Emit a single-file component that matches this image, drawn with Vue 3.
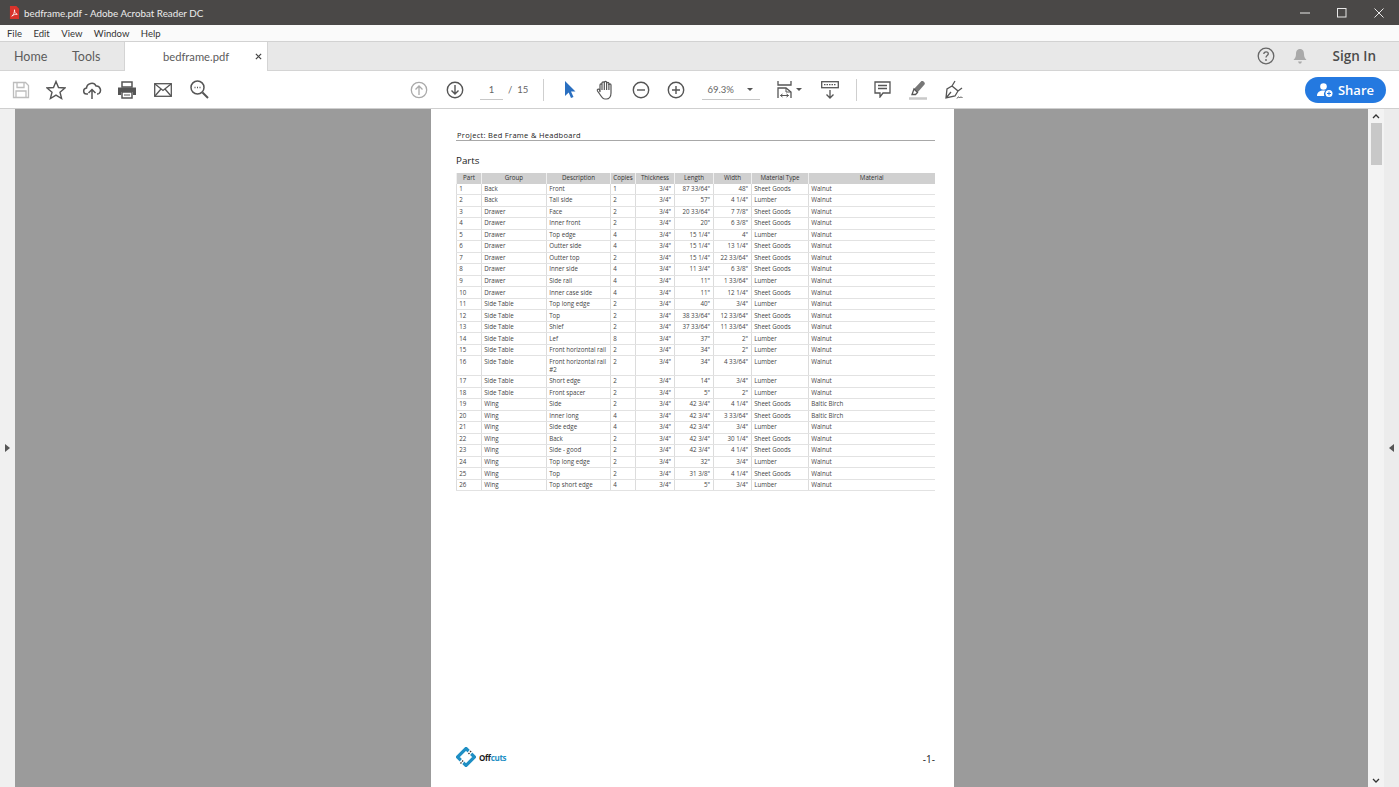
<template>
  <div class="app">
    <div class="titlebar">
      <svg class="pdf-icon" viewBox="0 0 12 14" width="11" height="13">
        <path d="M1 0h7l3 3v11H1z" fill="#d9332b" />
        <path d="M3 11c2-1 3-4 3-7 0 3 1 4 3 5-2-.3-4 .4-6 2z" fill="none" stroke="#fff" stroke-width=".9" />
      </svg>
      <span class="title">bedframe.pdf - Adobe Acrobat Reader DC</span>
      <div class="win-btns">
        <svg viewBox="0 0 10 10" width="10" height="10"><path d="M0 5h10" stroke="#e8e8e8" /></svg>
        <svg viewBox="0 0 10 10" width="10" height="10"><rect x=".5" y=".5" width="8.5" height="8.5" fill="none" stroke="#e8e8e8" /></svg>
        <svg viewBox="0 0 10 10" width="10" height="10"><path d="M.5.5l9 9M9.500.5l-9 9" stroke="#e8e8e8" /></svg>
      </div>
    </div>

    <div class="menubar">
      <span v-for="m in menus" :key="m">{{ m }}</span>
    </div>

    <div class="tabbar">
      <span class="nav-tab home">Home</span>
      <span class="nav-tab tools">Tools</span>
      <div class="doc-tab">
        <span>bedframe.pdf</span>
        <svg viewBox="0 0 8 8" width="7" height="7"><path d="M1 1l6 6M7 1L1 7" stroke="#444" stroke-width="1.4" /></svg>
      </div>
      <div class="tab-right">
        <svg viewBox="0 0 18 18" width="18" height="18">
          <circle cx="9" cy="9" r="7.800" fill="none" stroke="#666" stroke-width="1.300" />
          <path d="M6.800 7c.2-3 4.500-2.800 4.500-.2 0 1.800-2.300 1.800-2.300 3.700" fill="none" stroke="#666" stroke-width="1.300" />
          <circle cx="9" cy="13" r=".9" fill="#666" />
        </svg>
        <svg class="bell" viewBox="0 0 14 16" width="14" height="16">
          <path d="M7 1c-3 0-4 2.500-4 5 0 3-1 4-2.500 6h13C12 10 11 9 11 6c0-2.500-1-5-4-5z" fill="#a9a9a9" />
          <path d="M5 13.500h4l-1 2H6z" fill="#a9a9a9" />
        </svg>
        <span class="signin">Sign In</span>
      </div>
    </div>

    <div class="toolbar">
      <svg class="ic save" viewBox="0 0 18 18" width="18" height="18" fill="none" stroke="#bdbdbd" stroke-width="1.300">
        <path d="M1.500 1.500h12l3 3v12h-15z" />
        <path d="M5 1.500v5h7v-5M4 16.500v-6.500h10v6.500" />
      </svg>
      <svg class="ic star" viewBox="0 0 20 20" width="20" height="20" fill="none" stroke="#555" stroke-width="1.400">
        <path d="M10 1.500l2.500 6 6.500.5-5 4.200 1.600 6.300-5.600-3.400-5.600 3.400 1.600-6.300-5-4.200 6.500-.5z" />
      </svg>
      <svg class="ic cloud" viewBox="0 0 20 20" width="20" height="20" fill="none" stroke="#555" stroke-width="1.500">
        <path d="M6 14H4.500C1 14 .5 8.500 4.500 8 5 3 12 1.500 14 6c4-.5 6 5 3 7.500-.6.400-1 .5-2 .5" />
        <path d="M10 19v-9M6.500 13l3.500-3.500 3.500 3.500" />
      </svg>
      <svg class="ic print" viewBox="0 0 18 18" width="18" height="18">
        <path d="M4 1h10v5H4z" fill="none" stroke="#555" stroke-width="1.500" />
        <path d="M0 6.500h18V14h-3v-3H3v3H0z" fill="#555" />
        <path d="M4 11h10v6H4z" fill="none" stroke="#555" stroke-width="1.500" />
        <path d="M6 14h6" stroke="#555" />
      </svg>
      <svg class="ic mail" viewBox="0 0 18 14" width="18" height="14" fill="none" stroke="#555" stroke-width="1.300">
        <rect x=".7" y=".7" width="16.600" height="12.600" />
        <path d="M1 1l8 6.500L17 1M1 13l6-7M17 13l-6-7" />
      </svg>
      <svg class="ic search" viewBox="0 0 19 19" width="19" height="19" fill="none" stroke="#555" stroke-width="1.500">
        <circle cx="7.500" cy="7.500" r="6.500" />
        <path d="M12.500 12.500l5.500 5.500" stroke-width="2" />
        <path d="M4.500 7.500h1M7 7.500h1M9.500 7.500h1" />
      </svg>

      <svg class="ic up" viewBox="0 0 18 18" width="18" height="18" fill="none" stroke="#aaa" stroke-width="1.300">
        <circle cx="9" cy="9" r="7.700" />
        <path d="M9 14V5M5.500 8.500L9 5l3.500 3.500" />
      </svg>
      <svg class="ic down" viewBox="0 0 18 18" width="18" height="18" fill="none" stroke="#555" stroke-width="1.400">
        <circle cx="9" cy="9" r="7.700" />
        <path d="M9 4v9M5.500 9.500L9 13l3.500-3.500" />
      </svg>
      <div class="pager">
        <span class="page-input">1</span>
        <span class="page-total">/&nbsp; 15</span>
      </div>
      <i class="divider first"></i>
      <svg class="ic cursor" viewBox="0 0 12 17" width="12" height="17">
        <path d="M1 0l10.500 10.500H7l2.500 5.500-2.500 1-2.300-5.500L1 15z" fill="#2a6fc0" />
      </svg>
      <svg class="ic hand" viewBox="0 0 19 20" width="19" height="20" fill="none" stroke="#555" stroke-width="1.200">
        <path d="M4 12V5c0-1.500 2-1.500 2 0V3c0-1.500 2.300-1.500 2.300 0v-.5c0-1.500 2.300-1.500 2.300 0V3.500c0-1.500 2.300-1.500 2.300 0V5c0-1.500 2.100-1.500 2.100 0v8c0 3.500-2 6-4.500 6H9c-2.500 0-3.500-2-5-4.500L1.500 11c-.8-1.500 1-2.500 2-1.300z" />
        <path d="M6 5v5M8.300 3v7M10.600 3v7M12.900 4v6" />
      </svg>
      <svg class="ic minus" viewBox="0 0 18 18" width="18" height="18" fill="none" stroke="#555" stroke-width="1.400">
        <circle cx="9" cy="9" r="7.700" />
        <path d="M5 9h8" />
      </svg>
      <svg class="ic plus" viewBox="0 0 18 18" width="18" height="18" fill="none" stroke="#555" stroke-width="1.400">
        <circle cx="9" cy="9" r="7.700" />
        <path d="M5 9h8M9 5v8" />
      </svg>
      <div class="zoom-box">
        <span>69.3%</span>
        <b class="caret"></b>
      </div>
      <svg class="ic fit" viewBox="0 0 16 18" width="16" height="18" fill="none" stroke="#555" stroke-width="1.300">
        <path d="M1 0v4h13V0M1 17V7h8l5 4v6" />
        <path d="M9 7v4h5" stroke-width="1" />
        <path d="M3.500 14.500h8M3.500 14.500l2-1.500M3.500 14.500l2 1.500M11.500 14.500l-2-1.500M11.500 14.500l-2 1.500" stroke-width="1" />
      </svg>
      <b class="caret fit-caret"></b>
      <svg class="ic stamp" viewBox="0 0 18 18" width="18" height="18" fill="none" stroke="#555" stroke-width="1.300">
        <rect x=".7" y=".7" width="16.600" height="6" />
        <path d="M3 3.700h12" stroke-dasharray="1.500 1" />
        <path d="M9 9v8M5.500 13.500L9 17l3.500-3.500" />
      </svg>
      <i class="divider second"></i>
      <svg class="ic comment" viewBox="0 0 17 17" width="17" height="17" fill="none" stroke="#555" stroke-width="1.300">
        <path d="M1 1h15v11H9l-3 4v-4H1z" />
        <path d="M4 4.500h9M4 7.500h9" />
      </svg>
      <svg class="ic pen" viewBox="0 0 20 20" width="20" height="20">
        <path d="M6 9L13 1.500c1.500-1.500 5 1.500 3.500 3L9.500 12.500z" fill="#777" />
        <path d="M6 9l3.500 3.500-2 2H4z" fill="none" stroke="#555" stroke-width="1.300" />
        <path d="M1 18.500h18" stroke="#c9c9c9" stroke-width="2.500" />
      </svg>
      <svg class="ic sign" viewBox="0 0 20 20" width="20" height="20" fill="none" stroke="#555" stroke-width="1.300">
        <path d="M8 6l6 5-3 5-9 2 1-9zM2 18l5-6M8 6l3-5M14 11l4-3" />
        <path d="M13 18.500c1-2 2-2 2.500-.5.500-1 1-1 3-.5" stroke-width="1" />
      </svg>
      <button class="share">
        <svg viewBox="0 0 16 14" width="16" height="14">
          <circle cx="6.500" cy="3.500" r="3.300" fill="#fff" />
          <path d="M0 13c0-4 3-5.500 6.500-5.500 1 0 1.500.1 2 .3-1.500 1-2 3-1.200 5.200z" fill="#fff" />
          <circle cx="12" cy="10.500" r="3.500" fill="#fff" />
          <path d="M10 10.500h4M12 8.500v4" stroke="#2479e0" />
        </svg>
        <span>Share</span>
      </button>
    </div>

    <div class="workspace">
      <div class="side-strip"><b class="tri left"></b></div>
      <div class="viewer">
        <div class="page">
          <div class="project">Project: Bed Frame &amp; Headboard</div>
          <h2>Parts</h2>
          <table>
            <colgroup>
              <col v-for="(w, i) in colWidths" :key="i" :style="{ width: w + 'px' }" />
            </colgroup>
            <thead>
              <tr><th v-for="h in headers" :key="h">{{ h }}</th></tr>
            </thead>
            <tbody>
              <tr v-for="r in rows" :key="r[0]">
                <td v-for="(c, i) in r" :key="i" :class="{ num: i === 4 || i === 5 || i === 6 }">{{ c }}</td>
              </tr>
            </tbody>
          </table>
          <div class="page-foot">
            <div class="logo">
              <svg viewBox="0 0 20 20" width="20" height="20">
                <path d="M10 1.500L18.500 10 10 18.500 1.500 10z" fill="none" stroke="#1f8fc4" stroke-width="3.200" />
                <path d="M4 17L16 3" stroke="#fff" stroke-width="3.500" />
                <path d="M12.500 7l3-3.500M4.500 16.500l3-3.500" stroke="#333" stroke-width="1.300" stroke-dasharray="1.500 1" />
              </svg>
              <span class="logo-text">Off<em>cuts</em></span>
            </div>
            <span class="page-num">-1-</span>
          </div>
        </div>
      </div>
      <div class="scrollbar">
        <svg viewBox="0 0 8 5" width="8" height="5"><path d="M1 4l3-3 3 3" fill="none" stroke="#333" stroke-width="1.300" /></svg>
        <div class="thumb"></div>
        <div class="track"></div>
        <svg viewBox="0 0 8 5" width="8" height="5"><path d="M1 1l3 3 3-3" fill="none" stroke="#333" stroke-width="1.300" /></svg>
      </div>
      <div class="side-strip right"><b class="tri rgt"></b></div>
    </div>
  </div>
</template>

<script setup>
const menus = ["File", "Edit", "View", "Window", "Help"];
const headers = ["Part", "Group", "Description", "Copies", "Thickness", "Length", "Width", "Material Type", "Material"];
const colWidths = [25, 65, 64, 25, 39, 39, 38, 57, 126];
const rows = [
  ["1", "Back", "Front", "1", "3/4\"", "87 33/64\"", "48\"", "Sheet Goods", "Walnut"],
  ["2", "Back", "Tall side", "2", "3/4\"", "57\"", "4 1/4\"", "Lumber", "Walnut"],
  ["3", "Drawer", "Face", "2", "3/4\"", "20 33/64\"", "7 7/8\"", "Sheet Goods", "Walnut"],
  ["4", "Drawer", "Inner front", "2", "3/4\"", "20\"", "6 3/8\"", "Sheet Goods", "Walnut"],
  ["5", "Drawer", "Top edge", "4", "3/4\"", "15 1/4\"", "4\"", "Lumber", "Walnut"],
  ["6", "Drawer", "Outter side", "4", "3/4\"", "15 1/4\"", "13 1/4\"", "Sheet Goods", "Walnut"],
  ["7", "Drawer", "Outter top", "2", "3/4\"", "15 1/4\"", "22 33/64\"", "Sheet Goods", "Walnut"],
  ["8", "Drawer", "Inner side", "4", "3/4\"", "11 3/4\"", "6 3/8\"", "Sheet Goods", "Walnut"],
  ["9", "Drawer", "Side rail", "4", "3/4\"", "11\"", "1 33/64\"", "Lumber", "Walnut"],
  ["10", "Drawer", "Inner case side", "4", "3/4\"", "11\"", "12 1/4\"", "Sheet Goods", "Walnut"],
  ["11", "Side Table", "Top long edge", "2", "3/4\"", "40\"", "3/4\"", "Lumber", "Walnut"],
  ["12", "Side Table", "Top", "2", "3/4\"", "38 33/64\"", "12 33/64\"", "Sheet Goods", "Walnut"],
  ["13", "Side Table", "Shlef", "2", "3/4\"", "37 33/64\"", "11 33/64\"", "Sheet Goods", "Walnut"],
  ["14", "Side Table", "Lef", "8", "3/4\"", "37\"", "2\"", "Lumber", "Walnut"],
  ["15", "Side Table", "Front horizontal rail", "2", "3/4\"", "34\"", "2\"", "Lumber", "Walnut"],
  ["16", "Side Table", "Front horizontal rail #2", "2", "3/4\"", "34\"", "4 33/64\"", "Lumber", "Walnut"],
  ["17", "Side Table", "Short edge", "2", "3/4\"", "14\"", "3/4\"", "Lumber", "Walnut"],
  ["18", "Side Table", "Front spacer", "2", "3/4\"", "5\"", "2\"", "Lumber", "Walnut"],
  ["19", "Wing", "Side", "2", "3/4\"", "42 3/4\"", "4 1/4\"", "Sheet Goods", "Baltic Birch"],
  ["20", "Wing", "Inner long", "4", "3/4\"", "42 3/4\"", "3 33/64\"", "Sheet Goods", "Baltic Birch"],
  ["21", "Wing", "Side edge", "4", "3/4\"", "42 3/4\"", "3/4\"", "Lumber", "Walnut"],
  ["22", "Wing", "Back", "2", "3/4\"", "42 3/4\"", "30 1/4\"", "Sheet Goods", "Walnut"],
  ["23", "Wing", "Side - good", "2", "3/4\"", "42 3/4\"", "4 1/4\"", "Sheet Goods", "Walnut"],
  ["24", "Wing", "Top long edge", "2", "3/4\"", "32\"", "3/4\"", "Lumber", "Walnut"],
  ["25", "Wing", "Top", "2", "3/4\"", "31 3/8\"", "4 1/4\"", "Sheet Goods", "Walnut"],
  ["26", "Wing", "Top short edge", "4", "3/4\"", "5\"", "3/4\"", "Lumber", "Walnut"],
];
</script>

<style>
html,
body {
  margin: 0;
  overflow: hidden;
}
</style>

<style scoped>
.app {
  height: 787px;
  display: flex;
  flex-direction: column;
  overflow: hidden;
  font-family: Lato, "Open Sans", sans-serif;
  color: #444;
}
.titlebar {
  height: 25px;
  flex: none;
  background: #4a4847;
  display: flex;
  align-items: center;
  padding-left: 9px;
  color: #ececec;
  font-size: 9.800px;
}
.title {
  margin-left: 4px;
}
.win-btns {
  margin-left: auto;
  display: flex;
  gap: 27px;
  padding-right: 15px;
}
.menubar {
  height: 16px;
  flex: none;
  background: #fafafa;
  display: flex;
  align-items: center;
  padding-left: 7px;
  font-size: 9.500px;
  color: #333;
  gap: 11.500px;
  border-bottom: 1px solid #d2d2d2;
}
.tabbar {
  height: 28px;
  flex: none;
  background: #e8e8e8;
  display: flex;
  align-items: center;
  border-bottom: 1px solid #d4d4d4;
  font-size: 12.500px;
  color: #5c5c5c;
}
.nav-tab.home {
  margin-left: 14px;
  width: 58px;
}
.nav-tab.tools {
  width: 52px;
}
.doc-tab {
  width: 144px;
  height: 29px;
  align-self: flex-start;
  background: #fff;
  box-sizing: border-box;
  display: flex;
  align-items: center;
  padding-left: 38px;
  font-size: 11.200px;
  border-left: 1px solid #d4d4d4;
  border-right: 1px solid #d4d4d4;
}
.doc-tab span {
  width: 92px;
}
.tab-right {
  margin-left: auto;
  display: flex;
  align-items: center;
  padding-right: 23px;
}
.bell {
  margin-left: 18px;
}
.signin {
  margin-left: 26px;
  font-family: "Open Sans", sans-serif;
  font-size: 13.500px;
  font-weight: 600;
  color: #4b4b4b;
}
.toolbar {
  height: 37px;
  flex: none;
  background: #fff;
  border-bottom: 1px solid #cfcfcf;
  display: flex;
  align-items: center;
  padding-left: 12px;
  font-size: 9.500px;
  color: #666;
}
.ic {
  flex: none;
}
.star { margin-left: 16px; }
.cloud { margin-left: 16px; }
.print { margin-left: 16px; }
.mail { margin-left: 18px; }
.search { margin-left: 18px; }
.up { margin-left: 201px; }
.down { margin-left: 18px; }
.pager {
  display: flex;
  align-items: center;
  margin-left: 16px;
}
.page-input {
  width: 23px;
  text-align: center;
  border-bottom: 1px solid #c8c8c8;
  height: 21px;
  line-height: 21px;
  box-sizing: border-box;
}
.page-total {
  margin-left: 5px;
  width: 19px;
  white-space: nowrap;
}
.divider {
  width: 1px;
  height: 22px;
  background: #cfcfcf;
  flex: none;
}
.divider.first { margin-left: 16px; }
.cursor { margin-left: 20px; }
.hand { margin-left: 19.500px; }
.minus { margin-left: 17px; }
.plus { margin-left: 17px; }
.zoom-box {
  margin-left: 17px;
  width: 58px;
  height: 21px;
  box-sizing: border-box;
  border-bottom: 1px solid #c8c8c8;
  display: flex;
  align-items: center;
  justify-content: space-between;
  padding: 0 7px 0 6px;
}
.caret {
  width: 0;
  height: 0;
  border-left: 3px solid transparent;
  border-right: 3px solid transparent;
  border-top: 3px solid #555;
}
.fit { margin-left: 17px; }
.fit-caret { margin-left: 3px; }
.stamp { margin-left: 19px; }
.divider.second { margin-left: 17px; }
.comment { margin-left: 17.500px; }
.pen { margin-left: 16.500px; }
.sign { margin-left: 16px; }
.share {
  margin-left: auto;
  margin-right: 13px;
  width: 81px;
  height: 26px;
  border: 0;
  border-radius: 13px;
  background: #2479e0;
  color: #fff;
  font-family: "Open Sans", sans-serif;
  font-size: 13px;
  font-weight: 600;
  display: flex;
  align-items: center;
  justify-content: center;
  gap: 5px;
  padding: 0;
}
.workspace {
  flex: 1;
  display: flex;
  min-height: 0;
}
.side-strip {
  width: 15px;
  flex: none;
  background: #f0f0f0;
  display: flex;
  align-items: center;
  justify-content: center;
  box-sizing: border-box;
}
.side-strip.right {
  background: #ececec;
}
.tri {
  width: 0;
  height: 0;
  border-top: 4px solid transparent;
  border-bottom: 4px solid transparent;
}
.tri.left {
  border-left: 5px solid #555;
}
.tri.rgt {
  border-right: 5px solid #555;
}
.viewer {
  flex: 1;
  background: #9b9b9b;
  display: flex;
  justify-content: center;
  padding-left: 2px;
  overflow: hidden;
}
.page {
  width: 523px;
  height: 678px;
  background: #fff;
  box-sizing: border-box;
  padding: 21px 19px 0 25px;
  display: flex;
  flex-direction: column;
  font-family: "Open Sans", sans-serif;
  color: #222;
}
.project {
  font-size: 7.500px;
  line-height: 10px;
  letter-spacing: .3px;
  padding: 0 0 0 1px;
  border-bottom: 1px solid #a8a8a8;
}
h2 {
  margin: 13px 0 6px;
  font-size: 9.800px;
  line-height: 13px;
  font-weight: 400;
  color: #222;
}
table {
  width: 478px;
  table-layout: fixed;
  border-collapse: collapse;
  font-size: 6.200px;
  line-height: 8px;
  color: #444;
}
th {
  background: #d0d0d0;
  font-weight: 400;
  height: 10.500px;
  padding: 0;
  border-left: 1px solid #efefef;
  color: #333;
}
td {
  padding: 1.280px 3px 1.280px 2.200px;
  vertical-align: top;
  border-bottom: 1px solid #e2e2e2;
  border-left: 1px solid #dcdcdc;
}
td.num {
  text-align: right;
}
.page-foot {
  margin-top: auto;
  display: flex;
  align-items: center;
  justify-content: space-between;
  height: 24px;
  margin-bottom: 18px;
}
.logo {
  display: flex;
  align-items: center;
  gap: 3px;
}
.logo-text {
  font-size: 8px;
  font-weight: 700;
  letter-spacing: -.3px;
  color: #1a1a1a;
}
.logo-text em {
  font-style: normal;
  color: #1f8fc4;
}
.page-num {
  font-size: 10px;
  padding-top: 3px;
}
.scrollbar {
  width: 16px;
  flex: none;
  background: #f3f3f3;
  display: flex;
  flex-direction: column;
  align-items: center;
  padding: 5px 0 4px;
  box-sizing: border-box;
}
.thumb {
  width: 11px;
  height: 42px;
  margin-top: 4px;
  background: #c8c8c8;
}
.track {
  flex: 1;
}
</style>
